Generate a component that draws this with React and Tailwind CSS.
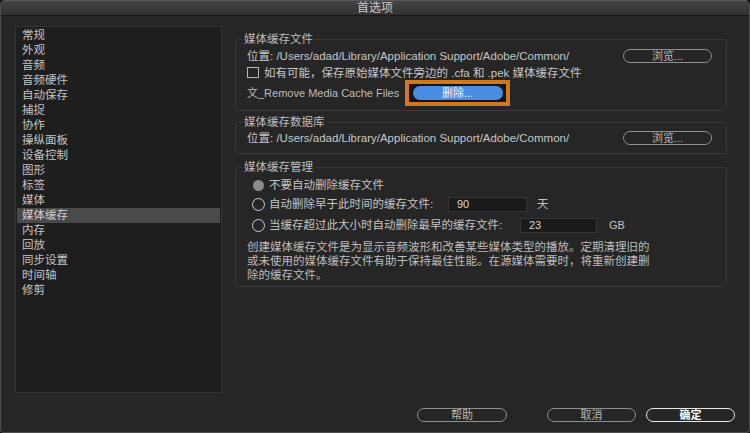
import React from "react";

const categories = [
  "常规",
  "外观",
  "音频",
  "音频硬件",
  "自动保存",
  "捕捉",
  "协作",
  "操纵面板",
  "设备控制",
  "图形",
  "标签",
  "媒体",
  "媒体缓存",
  "内存",
  "回放",
  "同步设置",
  "时间轴",
  "修剪",
];

const cachePath = "位置: /Users/adad/Library/Application Support/Adobe/Common/";

function PillButton({ children, className = "" }) {
  return (
    <button
      className={
        "h-[14px] rounded-full border border-[#8f8f8f] text-[11px] leading-[12px] text-[#b9b9b9] flex items-center justify-center " +
        className
      }
    >
      {children}
    </button>
  );
}

function Group({ title, children, className = "" }) {
  return (
    <fieldset
      className={
        "border border-[#383838] rounded-[3px] pl-[6px] pr-[14px] " + className
      }
    >
      <legend className="px-[2px] text-[11.5px] leading-[14px] text-[#bdbdbd]">
        {title}
      </legend>
      <div className="pl-[5px]">{children}</div>
    </fieldset>
  );
}

function Radio({ checked }) {
  if (checked) {
    return (
      <span className="ml-[6px] w-[11px] h-[11px] rounded-full bg-[#8c8c8c] shrink-0" />
    );
  }
  return (
    <span className="ml-[5px] w-[13px] h-[13px] rounded-full border-[1.5px] border-[#cfcfcf] shrink-0" />
  );
}

function NumberField({ value, width }) {
  return (
    <input
      readOnly
      value={value}
      className={
        "h-[15px] bg-[#1a1a1a] border border-[#363636] pl-[8px] text-[11px] leading-[13px] text-[#d6d6d6] outline-none " +
        width
      }
    />
  );
}

export default function App() {
  return (
    <div className="w-[750px] h-[433px] bg-[#121212] font-['Liberation_Sans','Noto_Sans_CJK_SC',sans-serif] text-[#c4c4c4]">
      <div className="h-full flex flex-col bg-[#262626] rounded-t-[5px] rounded-b-[4px] border-x border-b border-[#4d4d4d] overflow-hidden">
        {/* title bar */}
        <div className="h-[16px] shrink-0 bg-gradient-to-b from-[#444444] to-[#323232] border-t border-[#5a5a5a] border-b border-b-[#161616] flex items-center justify-center">
          <span className="text-[12px] leading-[14px] text-[#c9c9c9]">首选项</span>
        </div>

        <div className="flex items-start">
          {/* category list */}
          <div className="ml-[14px] mt-[10px] w-[207px] h-[367px] bg-[#1e1e1e] border border-[#343434] p-[1px]">
            {categories.map((c) => (
              <div
                key={c}
                className={
                  "h-[15px] leading-[15px] pl-[5px] text-[11.5px] " +
                  (c === "媒体缓存" ? "bg-[#4a4a4a] text-[#d0d0d0]" : "text-[#c4c4c4]")
                }
              >
                {c}
              </div>
            ))}
          </div>

          {/* settings pane */}
          <div className="ml-[13px] w-[492px] pt-[16px] text-[11.5px] leading-[14px]">
            <Group title="媒体缓存文件" className="pb-[4px]">
              <div className="mt-[1px] h-[18px] flex items-center justify-between">
                <span className="text-[#c6c6c6] whitespace-nowrap">{cachePath}</span>
                <PillButton className="w-[89px]">浏览...</PillButton>
              </div>
              <div className="h-[15px] flex items-center">
                <span className="w-[12px] h-[11px] border border-[#b5b5b5] shrink-0" />
                <span className="ml-[5px] text-[#c6c6c6] whitespace-nowrap">
                  如有可能，保存原始媒体文件旁边的 .cfa 和 .pek 媒体缓存文件
                </span>
              </div>
              <div className="h-[26px] flex items-center">
                <span className="w-[158px] shrink-0 whitespace-nowrap text-[11px] text-[#bcbcbc]">
                  文_Remove Media Cache Files
                </span>
                <div className="w-[105px] h-[26px] border-[4px] border-[#d4771c] bg-[#151515] flex items-center justify-center">
                  <button className="w-[90px] h-[14px] rounded-full bg-[#4a8ee2] text-[#f2f2f2] text-[11px] leading-[12px]">
                    删除...
                  </button>
                </div>
              </div>
            </Group>

            <Group title="媒体缓存数据库" className="mt-[4px] pb-[6px]">
              <div className="h-[18px] flex items-center justify-between">
                <span className="text-[#c6c6c6] whitespace-nowrap">{cachePath}</span>
                <PillButton className="w-[89px]">浏览...</PillButton>
              </div>
            </Group>

            <Group title="媒体缓存管理" className="mt-[6px] pb-[4px]">
              <div className="mt-[2px] h-[18px] flex items-center">
                <Radio checked />
                <span className="ml-[5px]">不要自动删除缓存文件</span>
              </div>
              <div className="mt-[1px] h-[18px] flex items-center">
                <Radio />
                <span className="ml-[4px] w-[179px] shrink-0 whitespace-nowrap">自动删除早于此时间的缓存文件:</span>
                <NumberField value="90" width="w-[79px]" />
                <span className="ml-[10px]">天</span>
              </div>
              <div className="mt-[3px] h-[18px] flex items-center">
                <Radio />
                <span className="ml-[4px] w-[251px] shrink-0 whitespace-nowrap">当缓存超过此大小时自动删除最早的缓存文件:</span>
                <NumberField value="23" width="w-[77px]" />
                <span className="ml-[12px] text-[11px]">GB</span>
              </div>
              <p className="mt-[6px] w-[408px] leading-[14px] text-[#bdbdbd]">
                创建媒体缓存文件是为显示音频波形和改善某些媒体类型的播放。定期清理旧的或未使用的媒体缓存文件有助于保持最佳性能。在源媒体需要时，将重新创建删除的缓存文件。
              </p>
            </Group>
          </div>
        </div>

        {/* dialog buttons */}
        <div className="mt-[15px] flex justify-end pr-[14px]">
          <PillButton className="w-[90px]">帮助</PillButton>
          <PillButton className="ml-[40px] w-[89px]">取消</PillButton>
          <button className="ml-[10px] w-[89px] h-[14px] rounded-full border-[1.5px] border-[#e8e8e8] text-[11px] leading-[12px] font-bold text-white flex items-center justify-center">
            确定
          </button>
        </div>
      </div>
    </div>
  );
}
